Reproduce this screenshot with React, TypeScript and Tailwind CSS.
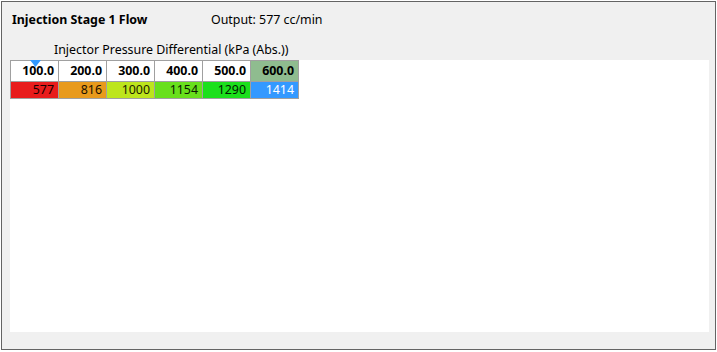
const cols = [
  { head: '100.0', value: 577, bg: 'bg-[#e81c1c]', text: 'text-[#1a0000]', headBg: 'bg-white' },
  { head: '200.0', value: 816, bg: 'bg-[#e89a1c]', text: 'text-[#1a1000]', headBg: 'bg-white' },
  { head: '300.0', value: 1000, bg: 'bg-[#bde51c]', text: 'text-[#1a1a00]', headBg: 'bg-white' },
  { head: '400.0', value: 1154, bg: 'bg-[#68e01c]', text: 'text-[#0a1a00]', headBg: 'bg-white' },
  { head: '500.0', value: 1290, bg: 'bg-[#1ce01c]', text: 'text-[#001a00]', headBg: 'bg-white' },
  { head: '600.0', value: 1414, bg: 'bg-[#3399ff]', text: 'text-white', headBg: 'bg-[#8fbc8f]' },
];

export default function App() {
  return (
    <div className="w-[717px] h-[352px] bg-white pt-px pl-px font-['Noto_Sans','Open_Sans',sans-serif] text-[12.4px] text-black">
      <div className="w-[715px] h-[349px] border border-[#646464] bg-[#f0f0f0] flex flex-col">
        <div className="flex items-center h-[34px] pl-[10px] pt-[2px]">
          <span className="font-bold w-[199px]">Injection Stage 1 Flow</span>
          <span>Output: 577 cc/min</span>
        </div>
        <div className="pl-[52px] h-[24px] flex items-center pt-[4px]">
          Injector Pressure Differential (kPa (Abs.))
        </div>
        <div className="ml-[8px] w-[699px] h-[272px] bg-white">
          <div className="flex flex-col w-[289px] border-l border-t border-[#a0a0a0]">
            <div className="flex h-[21px]">
              {cols.map((c, i) => (
                <div
                  key={c.head}
                  className={`relative w-[48px] border-r border-b border-[#a0a0a0] ${c.headBg} flex items-center justify-end pr-[4px] font-bold`}
                >
                  {i === 0 && (
                    <svg className="absolute left-[19px] top-[-1px]" width="11" height="7" viewBox="0 0 11 7">
                      <polygon points="0,0 11,0 5.5,7" fill="#3399ff" />
                    </svg>
                  )}
                  {c.head}
                </div>
              ))}
            </div>
            <div className="flex h-[17px]">
              {cols.map((c) => (
                <div
                  key={c.head}
                  className={`w-[48px] border-r border-b border-[#a0a0a0] ${c.bg} ${c.text} flex items-center justify-end pr-[4px]`}
                >
                  {c.value}
                </div>
              ))}
            </div>
          </div>
        </div>
      </div>
    </div>
  );
}
